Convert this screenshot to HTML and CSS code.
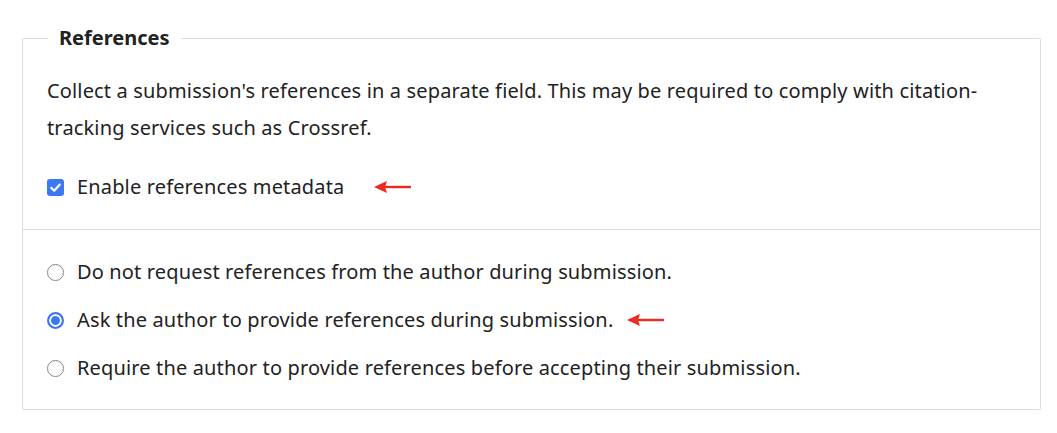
FILE: index.html
```html
<!DOCTYPE html>
<html lang="en">
<head>
<meta charset="utf-8">
<title>References</title>
<link rel="stylesheet" href="styles.css">
</head>
<body>
<fieldset class="panel">
  <legend class="panel-legend">References</legend>
  <div class="section">
    <p class="desc">Collect a submission's references in a separate field. This may be required to comply with citation-tracking services such as Crossref.</p>
    <label class="option">
      <span class="checkbox"><svg viewBox="0 0 17 17" width="17" height="17"><rect x="0" y="0" width="17" height="17" rx="3" fill="#3b78f2"/><path d="M4.2 8.8 L7.2 11.8 L12.8 5.6" fill="none" stroke="#fff" stroke-width="2.2" stroke-linecap="round" stroke-linejoin="round"/></svg></span>
      <span class="label-text">Enable references metadata</span>
      <span class="arrow"><svg viewBox="0 0 37 12" width="37" height="12"><polygon points="0,6 13,0 11,6 13,12" fill="#ee2a1e"/><rect x="10" y="4.8" width="27" height="2.4" fill="#ee2a1e"/></svg></span>
    </label>
  </div>
  <div class="section radios">
    <label class="option">
      <span class="radio"></span>
      <span class="label-text">Do not request references from the author during submission.</span>
    </label>
    <label class="option">
      <span class="radio checked"></span>
      <span class="label-text">Ask the author to provide references during submission.</span>
      <span class="arrow arrow-near"><svg viewBox="0 0 37 12" width="37" height="12"><polygon points="0,6 13,0 11,6 13,12" fill="#ee2a1e"/><rect x="10" y="4.8" width="27" height="2.4" fill="#ee2a1e"/></svg></span>
    </label>
    <label class="option">
      <span class="radio"></span>
      <span class="label-text">Require the author to provide references before accepting their submission.</span>
    </label>
  </div>
</fieldset>
</body>
</html>
```

FILE: styles.css
```css
html, body {
  margin: 0;
  padding: 0;
  background: #fff;
}
body {
  font-family: "Noto Sans", "Open Sans", sans-serif;
  color: #222;
  font-size: 20px;
  letter-spacing: 0.15px;
  padding: 28px 16px 0 22px;
}
.panel {
  margin: 0;
  padding: 0;
  width: 1019px;
  box-sizing: border-box;
  border: 1px solid #dcdcdc;
  border-radius: 2px;
}
.panel-legend {
  margin-left: 25px;
  padding: 0 11px;
  font-weight: bold;
  font-size: 20px;
  letter-spacing: 0;
  color: #222;
  line-height: 20px;
}
.section {
  padding: 0 24px;
}
.section + .section {
  border-top: 1px solid #dcdcdc;
}
.desc {
  margin: 24px 0 0;
  line-height: 37px;
  color: #222;
}
.option {
  display: flex;
  align-items: center;
  height: 24px;
  line-height: 24px;
}
.desc + .option {
  margin-top: 29px;
  margin-bottom: 30px;
}
.radios {
  padding-top: 30px;
  padding-bottom: 29px;
  display: flex;
  flex-direction: column;
  gap: 24px;
}
.checkbox {
  display: flex;
  width: 17px;
  height: 17px;
  margin-right: 13px;
}
.radio {
  width: 15px;
  height: 15px;
  border: 1px solid #858585;
  border-radius: 50%;
  margin-right: 13px;
  box-sizing: content-box;
  flex: none;
}
.radio.checked {
  width: 13px;
  height: 13px;
  border: 2px solid #3b78f2;
  background: #3b78f2;
  box-shadow: inset 0 0 0 2px #fff;
}
.label-text {
  white-space: nowrap;
}
.arrow {
  display: flex;
  margin-left: 30px;
}
.arrow-near {
  margin-left: 14px;
}
```
